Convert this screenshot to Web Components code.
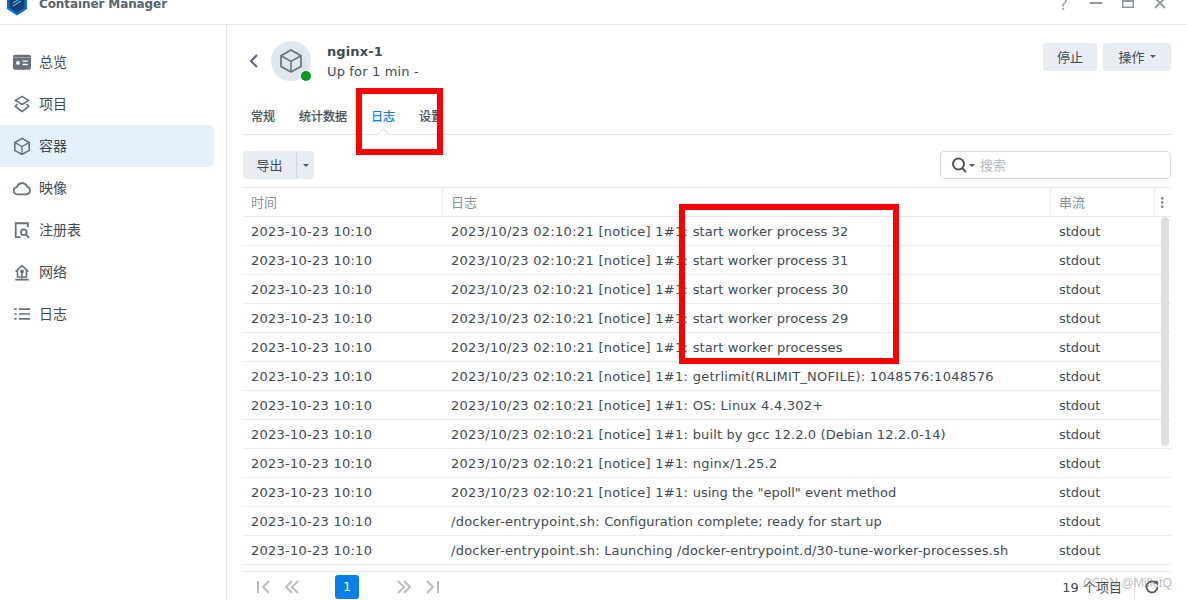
<!DOCTYPE html>
<html>
<head>
<meta charset="utf-8">
<title>Container Manager</title>
<style>
html, body { margin: 0; height: 600px; overflow: hidden; background: #fff; }
body {
    font-family: "DejaVu Sans", "Noto Sans CJK SC", sans-serif;
    font-size: 13px;
    color: #414b55;
}
#page { display: flex; flex-direction: column; width: 1187px; height: 600px; position: relative; overflow: hidden; }
#body { display: flex; flex: 1; min-height: 0; }
.pre { letter-spacing: .29px; }
.pre2 { letter-spacing: .26px; }
</style>
</head>
<body>
<div id="page">
    <cm-titlebar title-text="Container Manager"></cm-titlebar>
    <div id="body">
        <cm-sidebar>
            <cm-nav-item icon="overview">总览</cm-nav-item>
            <cm-nav-item icon="project">项目</cm-nav-item>
            <cm-nav-item icon="container" active>容器</cm-nav-item>
            <cm-nav-item icon="image">映像</cm-nav-item>
            <cm-nav-item icon="registry">注册表</cm-nav-item>
            <cm-nav-item icon="network">网络</cm-nav-item>
            <cm-nav-item icon="log">日志</cm-nav-item>
        </cm-sidebar>
        <cm-main>
            <cm-header name="nginx-1" status="Up for 1 min -"></cm-header>
            <cm-tabs>
                <cm-tab>常规</cm-tab>
                <cm-tab>统计数据</cm-tab>
                <cm-tab active>日志</cm-tab>
                <cm-tab>设置</cm-tab>
            </cm-tabs>
            <cm-toolbar></cm-toolbar>
            <log-table>
                <log-row><span class="pre">2023/10/23 02:10:21 [notice] 1#1: </span><span style="letter-spacing:.09px">start worker process 32</span></log-row>
                <log-row><span class="pre">2023/10/23 02:10:21 [notice] 1#1: </span><span style="letter-spacing:.09px">start worker process 31</span></log-row>
                <log-row><span class="pre">2023/10/23 02:10:21 [notice] 1#1: </span><span style="letter-spacing:.09px">start worker process 30</span></log-row>
                <log-row><span class="pre">2023/10/23 02:10:21 [notice] 1#1: </span><span style="letter-spacing:.09px">start worker process 29</span></log-row>
                <log-row><span class="pre">2023/10/23 02:10:21 [notice] 1#1: </span><span style="letter-spacing:.1px">start worker processes</span></log-row>
                <log-row><span class="pre">2023/10/23 02:10:21 [notice] 1#1: </span><span style="letter-spacing:.26px">getrlimit(RLIMIT_NOFILE): 1048576:1048576</span></log-row>
                <log-row><span class="pre">2023/10/23 02:10:21 [notice] 1#1: </span><span style="letter-spacing:.22px">OS: Linux 4.4.302+</span></log-row>
                <log-row><span class="pre">2023/10/23 02:10:21 [notice] 1#1: </span><span style="letter-spacing:.13px">built by gcc 12.2.0 (Debian 12.2.0-14)</span></log-row>
                <log-row><span class="pre">2023/10/23 02:10:21 [notice] 1#1: </span><span style="letter-spacing:.25px">nginx/1.25.2</span></log-row>
                <log-row><span class="pre">2023/10/23 02:10:21 [notice] 1#1: </span><span>using the "epoll" event method</span></log-row>
                <log-row><span class="pre2">/docker-entrypoint.sh: </span><span style="letter-spacing:.05px">Configuration complete; ready for start up</span></log-row>
                <log-row><span class="pre2">/docker-entrypoint.sh: </span><span style="letter-spacing:.155px">Launching /docker-entrypoint.d/30-tune-worker-processes.sh</span></log-row>
            </log-table>
            <cm-pager total="19 个项目"></cm-pager>
        </cm-main>
    </div>
    <red-box style="left:356px;top:88px;width:87px;height:67px"></red-box>
    <red-box style="left:679px;top:204px;width:220px;height:160px"></red-box>
    <cm-watermark>CSDN @MilletQ</cm-watermark>
</div>

<script>
// --- title bar
const titlebarTemplate = document.createElement("template");
titlebarTemplate.innerHTML = `
    <style>
    :host {
        display: flex;
        align-items: center;
        flex: none;
        box-sizing: border-box;
        height: 43px;
        margin-top: -18px;
        padding: 2px 21px 0 5px;
        border-bottom: 1px solid #e3e8ee;
    }
    svg { display: block; }
    .name { margin-left: 10px; font-weight: bold; font-size: 12px; color: #5a6470; flex: 1; letter-spacing: -.1px; }
    .btns { display: flex; align-items: center; gap: 20px; }
    .help { color: #9aa0a6; font-size: 16px; width: 13px; text-align: center; }
    </style>
    <svg width="24" height="26" viewBox="0 0 24 26">
        <path d="M2 3h20v15l-10 6.500L2 18z" fill="#0a6fd8"/>
        <path d="M4.500 3h15v13.700l-7.500 5-7.500-5z" fill="#173f6b"/>
        <path d="M8 12l8-5M8 15l8-5" stroke="#57b7e8" stroke-width="1.200" fill="none"/>
    </svg>
    <span class="name"></span>
    <div class="btns">
        <span class="help">?</span>
        <svg width="12" height="13" viewBox="0 0 12 13"><path d="M0 5h12" stroke="#8f969e" stroke-width="2"/></svg>
        <svg width="12" height="13" viewBox="0 0 12 13"><path d="M.750 0h10.500v9.300H.750z" fill="none" stroke="#8f969e" stroke-width="1.500"/><path d="M1 0h10v4H1z" fill="#8f969e"/></svg>
        <svg width="12" height="13" viewBox="0 0 12 13"><path d="M1 0l10 10M11 0L1 10" stroke="#8f969e" stroke-width="1.800"/></svg>
    </div>
`;

class CmTitlebar extends HTMLElement {
    constructor() {
        super();
        this.attachShadow({ mode: 'open' });
        this.shadowRoot.appendChild(titlebarTemplate.content.cloneNode(true));
        this.shadowRoot.querySelector('.name').textContent = this.getAttribute('title-text');
    }
}
window.customElements.define("cm-titlebar", CmTitlebar);

// --- sidebar
class CmSidebar extends HTMLElement {
    constructor() {
        super();
        this.attachShadow({ mode: 'open' }).innerHTML = `
            <style>
            :host {
                display: flex;
                flex-direction: column;
                flex: none;
                box-sizing: border-box;
                width: 227px;
                padding: 16px 12px 0 0;
                border-right: 1px solid #e3e8ee;
            }
            </style>
            <slot></slot>
        `;
    }
}
window.customElements.define("cm-sidebar", CmSidebar);

const navIcons = {
    overview: `<rect x="0" y="2" width="20" height="16.500" rx="2" fill="#68717c"/><circle cx="5.500" cy="11" r="2.100" fill="#fff"/><path d="M10.500 9h6M10.500 12.800h6" stroke="#fff" stroke-width="1.600"/><path d="M0 5h20" stroke="#fff" stroke-opacity=".4" stroke-width="1"/>`,
    project: `<path d="M10 1.500l7.500 4.500L10 10.500 2.500 6z" fill="none" stroke="#68717c" stroke-width="1.800" stroke-linejoin="round"/><path d="M5 10l-2.500 2.500 7.500 6 7.500-6L15 10" fill="none" stroke="#68717c" stroke-width="1.800" stroke-linejoin="round"/>`,
    container: `<path d="M10 1.500l8 4.600v8.800l-8 4.600-8-4.600V6.100z" fill="none" stroke="#68717c" stroke-width="1.800" stroke-linejoin="round"/><path d="M2.300 6.300L10 10.600l7.700-4.300M10 10.600v8.600" fill="none" stroke="#68717c" stroke-width="1.500"/>`,
    image: `<path d="M5 17a4 4 0 0 1-.6-8 6 6 0 0 1 11.300-.6A4.400 4.400 0 0 1 15 17z" fill="none" stroke="#68717c" stroke-width="2" stroke-linejoin="round"/>`,
    registry: `<path d="M8.500 18H3V2.500h13.500V7M11 2.500" fill="none" stroke="#68717c" stroke-width="2"/><circle cx="12" cy="12.500" r="3.200" fill="none" stroke="#68717c" stroke-width="2"/><path d="M14.300 15l3.700 3.700" stroke="#68717c" stroke-width="2"/>`,
    network: `<path d="M3 9.500L10 3l7 6.500M5 8v7.500h10V8" fill="none" stroke="#68717c" stroke-width="1.800"/><path d="M2.500 18.500h15" stroke="#68717c" stroke-width="2"/><circle cx="10" cy="9.500" r="2.200" fill="#68717c"/><path d="M10 10v5" stroke="#68717c" stroke-width="1.800"/><path d="M10 15v3" stroke="#68717c" stroke-width="1.500"/>`,
    log: `<path d="M6.500 4.500H19M6.500 10H19M6.500 15.500H19" stroke="#68717c" stroke-width="1.900"/><path d="M1.500 4.500h2.500M1.500 10h2.500M1.500 15.500h2.500" stroke="#68717c" stroke-width="1.900"/>`
};

class CmNavItem extends HTMLElement {
    constructor() {
        super();
        this.attachShadow({ mode: 'open' }).innerHTML = `
            <style>
            :host {
                display: flex;
                align-items: center;
                gap: 8px;
                flex: none;
                box-sizing: border-box;
                height: 42px;
                padding: 0 0 2px 13px;
                font-size: 14px;
                color: #414b55;
                border-radius: 0 6px 6px 0;
            }
            :host([active]) { background: #e4f0fc; }
            svg { display: block; flex: none; margin-top: 2px; }
            </style>
            <svg width="18" height="18" viewBox="0 0 20 20">${navIcons[this.getAttribute('icon')]}</svg>
            <slot></slot>
        `;
    }
}
window.customElements.define("cm-nav-item", CmNavItem);

// --- main column
class CmMain extends HTMLElement {
    constructor() {
        super();
        this.attachShadow({ mode: 'open' }).innerHTML = `
            <style>
            :host {
                display: flex;
                flex-direction: column;
                flex: 1;
                min-width: 0;
                box-sizing: border-box;
                padding: 0 16px 0 16px;
            }
            </style>
            <slot></slot>
        `;
    }
}
window.customElements.define("cm-main", CmMain);

const headerTemplate = document.createElement("template");
headerTemplate.innerHTML = `
    <style>
    :host {
        display: flex;
        align-items: flex-start;
        flex: none;
        height: 84px;
        padding-top: 16px;
        box-sizing: border-box;
    }
    .back { margin: 13px 12px 0 6px; display: block; }
    .avatar {
        position: relative;
        width: 40px;
        height: 40px;
        border-radius: 50%;
        background: #e0e6ed;
        display: flex;
        align-items: center;
        justify-content: center;
    }
    .dot {
        position: absolute;
        right: 0;
        bottom: 0;
        width: 10px;
        height: 10px;
        border-radius: 50%;
        background: #0a9a1e;
    }
    .info { margin-left: 16px; flex: 1; padding-top: 2px; }
    .name { font-weight: bold; font-size: 13px; line-height: 18px; color: #414b55; letter-spacing: .1px; }
    .status { font-size: 13px; line-height: 22px; color: #414b55; letter-spacing: .15px; }
    .btns { display: flex; gap: 6px; padding-top: 2px; }
    .btn {
        display: flex;
        align-items: center;
        justify-content: center;
        gap: 5px;
        box-sizing: border-box;
        height: 28px;
        padding-bottom: 2px;
        background: #e8edf3;
        border-radius: 3px;
        font-size: 13px;
        color: #414b55;
    }
    .caret { width: 0; height: 0; border: 3.500px solid transparent; border-top: 3.500px solid #4d5661; border-bottom: 0; }
    </style>
    <svg class="back" width="10" height="14" viewBox="0 0 10 14"><path d="M8 1L2 7l6 6" fill="none" stroke="#5d6670" stroke-width="2"/></svg>
    <div class="avatar">
        <svg width="26" height="26" viewBox="0 0 26 26">
            <path d="M13 2l10 5.700v10.800L13 24 3 18.500V7.700z" fill="none" stroke="#68717c" stroke-width="1.700" stroke-linejoin="round"/>
            <path d="M3.400 8L13 13.300 22.600 8M13 13.300v10.400" fill="none" stroke="#68717c" stroke-width="1.500"/>
        </svg>
        <span class="dot"></span>
    </div>
    <div class="info">
        <div class="name"></div>
        <div class="status"></div>
    </div>
    <div class="btns">
        <div class="btn" style="width:54px">停止</div>
        <div class="btn" style="width:68px">操作<span class="caret"></span></div>
    </div>
`;

class CmHeader extends HTMLElement {
    constructor() {
        super();
        this.attachShadow({ mode: 'open' });
        this.shadowRoot.appendChild(headerTemplate.content.cloneNode(true));
        this.shadowRoot.querySelector('.name').textContent = this.getAttribute('name');
        this.shadowRoot.querySelector('.status').textContent = this.getAttribute('status');
    }
}
window.customElements.define("cm-header", CmHeader);

// --- tabs
class CmTabs extends HTMLElement {
    constructor() {
        super();
        this.attachShadow({ mode: 'open' }).innerHTML = `
            <style>
            :host {
                display: flex;
                gap: 24px;
                flex: none;
                box-sizing: border-box;
                height: 26px;
                padding: 0 8px;
                border-bottom: 1px solid #dfe5eb;
            }
            </style>
            <slot></slot>
        `;
    }
}
window.customElements.define("cm-tabs", CmTabs);

class CmTab extends HTMLElement {
    constructor() {
        super();
        this.attachShadow({ mode: 'open' }).innerHTML = `
            <style>
            :host {
                display: block;
                position: relative;
                font-size: 12px;
                -webkit-text-stroke: .25px currentColor;
                line-height: 16px;
                height: 25px;
                color: #414b55;
            }
            :host([active]) { color: #0a7fe6; }
            .notch { display: none; }
            :host([active]) .notch {
                display: block;
                position: absolute;
                left: 50%;
                bottom: -5px;
                width: 8px;
                height: 8px;
                margin-left: -4px;
                background: #fff;
                border-left: 1px solid #dfe5eb;
                border-top: 1px solid #dfe5eb;
                transform: rotate(45deg);
            }
            </style>
            <slot></slot>
            <span class="notch"></span>
        `;
    }
}
window.customElements.define("cm-tab", CmTab);

// --- toolbar
class CmToolbar extends HTMLElement {
    constructor() {
        super();
        this.attachShadow({ mode: 'open' }).innerHTML = `
            <style>
            :host {
                display: flex;
                justify-content: space-between;
                flex: none;
                height: 28px;
                margin: 16px 0 8px;
            }
            .split { display: flex; background: #e8edf3; border-radius: 3px; height: 28px; font-size: 13px; }
            .label { width: 53px; display: flex; align-items: center; justify-content: center; box-sizing: content-box; padding-bottom: 2px; height: 24px; border-right: 1px solid #cfd6de; margin: 1px 0; }
            .drop { width: 17px; display: flex; align-items: center; justify-content: center; }
            .caret { width: 0; height: 0; border: 3.500px solid transparent; border-top: 3.500px solid #4d5661; border-bottom: 0; }
            .search {
                display: flex;
                align-items: center;
                box-sizing: border-box;
                width: 231px;
                height: 28px;
                padding-left: 10px;
                gap: 2px;
                border: 1px solid #d5dde5;
                border-radius: 4px;
            }
            .hint { color: #b4b9bf; font-size: 13px; margin-left: 3px; padding-bottom: 2px; }
            svg { display: block; }
            </style>
            <div class="split">
                <div class="label">导出</div>
                <div class="drop"><span class="caret"></span></div>
            </div>
            <div class="search">
                <svg width="16" height="16" viewBox="0 0 16 16"><circle cx="7.500" cy="7" r="5.500" fill="none" stroke="#4d5661" stroke-width="2"/><path d="M11 11l4 4" stroke="#4d5661" stroke-width="2"/></svg>
                <span class="caret"></span>
                <span class="hint">搜索</span>
            </div>
        `;
    }
}
window.customElements.define("cm-toolbar", CmToolbar);

// --- log table
const tableTemplate = document.createElement("template");
tableTemplate.innerHTML = `
    <style>
    :host {
        display: block;
        position: relative;
        flex: none;
        height: 385px;
        border-top: 1px solid #e3e8ee;
        border-bottom: 1px solid #e3e8ee;
        box-sizing: border-box;
    }
    .head {
        display: grid;
        grid-template-columns: 200px 608px 104px 16px;
        height: 29px;
        box-sizing: border-box;
        border-bottom: 1px solid #e3e8ee;
        color: #8a929b;
        font-size: 13px;
    }
    .head div { display: flex; align-items: center; padding: 0 0 2px 8px; border-right: 1px solid #e9edf2; }
    .head div:last-child { border-right: 0; padding: 0 0 0 6px; }
    .thumb {
        position: absolute;
        left: 918px;
        top: 29px;
        width: 8px;
        height: 229px;
        border-radius: 4px;
        background: #e0e0e0;
    }
    </style>
    <div class="head">
        <div>时间</div>
        <div>日志</div>
        <div>串流</div>
        <div><svg width="3" height="11" viewBox="0 0 3 11"><path d="M0 0h2.500v2.500H0zM0 4.200h2.500v2.500H0zM0 8.400h2.500v2.500H0z" fill="#8a929b"/></svg></div>
    </div>
    <slot></slot>
    <div class="thumb"></div>
`;

class LogTable extends HTMLElement {
    constructor() {
        super();
        this.attachShadow({ mode: 'open' });
        this.shadowRoot.appendChild(tableTemplate.content.cloneNode(true));
    }
}
window.customElements.define("log-table", LogTable);

class LogRow extends HTMLElement {
    constructor() {
        super();
        this.attachShadow({ mode: 'open' }).innerHTML = `
            <style>
            :host {
                display: grid;
                grid-template-columns: 200px 608px 120px;
                align-items: center;
                box-sizing: border-box;
                height: 29px;
                border-bottom: 1px solid #e9edf2;
                font-size: 13px;
                color: #414b55;
                white-space: pre;
            }
            div { padding-left: 8px; }
            .time { letter-spacing: .25px; }
            </style>
            <div class="time">2023-10-23 10:10</div>
            <div><slot></slot></div>
            <div>stdout</div>
        `;
    }
}
window.customElements.define("log-row", LogRow);

// --- pager
class CmPager extends HTMLElement {
    constructor() {
        super();
        const stroke = 'fill="none" stroke="#bdbdbd" stroke-width="2"';
        this.attachShadow({ mode: 'open' }).innerHTML = `
            <style>
            :host {
                display: flex;
                align-items: center;
                flex: 1;
                padding: 2px 12px 0 14px;
                min-height: 0;
            }
            svg { display: block; flex: none; }
            .page {
                width: 24px;
                height: 24px;
                margin: 0 38px 0 36px;
                border-radius: 3px;
                background: #0a7fe6;
                color: #fff;
                font-size: 12px;
                display: flex;
                align-items: center;
                justify-content: center;
            }
            .total { margin-left: auto; padding: 0 12px 2px 0; font-size: 13px; }
            .refresh { border-left: 1px solid #dfe5eb; padding-left: 10px; height: 24px; display: flex; align-items: center; }
            </style>
            <svg width="13" height="14" viewBox="0 0 13 14" style="margin-right:14px"><path d="M1 1v12M12 1L6 7l6 6" ${stroke}/></svg>
            <svg width="15" height="14" viewBox="0 0 15 14"><path d="M8 1L2 7l6 6M14 1L8 7l6 6" ${stroke}/></svg>
            <div class="page">1</div>
            <svg width="15" height="14" viewBox="0 0 15 14" style="margin-right:14px"><path d="M1 1l6 6-6 6M7 1l6 6-6 6" ${stroke}/></svg>
            <svg width="13" height="14" viewBox="0 0 13 14"><path d="M12 1v12M1 1l6 6-6 6" ${stroke}/></svg>
            <span class="total"></span>
            <div class="refresh">
                <svg width="14" height="14" viewBox="0 0 16 16"><path d="M12.500 3.500A6.300 6.300 0 1 0 14.300 8" fill="none" stroke="#4d5661" stroke-width="2"/><path d="M10 1l5 .5-.5 5z" fill="#4d5661"/></svg>
            </div>
        `;
        this.shadowRoot.querySelector('.total').textContent = this.getAttribute('total');
    }
}
window.customElements.define("cm-pager", CmPager);

// --- things drawn on top of the screenshot
class RedBox extends HTMLElement {
    constructor() {
        super();
        this.attachShadow({ mode: 'open' }).innerHTML = `
            <style>
            :host {
                display: block;
                position: absolute;
                box-sizing: border-box;
                border: 6px solid #ff0000;
            }
            </style>
        `;
    }
}
window.customElements.define("red-box", RedBox);

class CmWatermark extends HTMLElement {
    constructor() {
        super();
        this.attachShadow({ mode: 'open' }).innerHTML = `
            <style>
            :host {
                display: block;
                position: absolute;
                left: 1083px;
                top: 576px;
                font-family: "Liberation Sans", sans-serif;
                font-size: 12.300px;
                color: rgba(120, 120, 120, .5);
                white-space: nowrap;
            }
            </style>
            <slot></slot>
        `;
    }
}
window.customElements.define("cm-watermark", CmWatermark);
</script>
</body>
</html>
